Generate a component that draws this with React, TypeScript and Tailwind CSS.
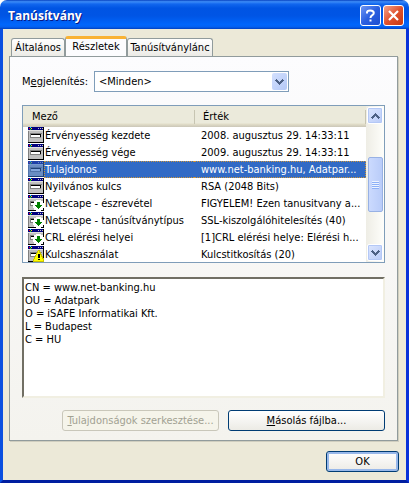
import React, { useState } from 'react';

type FieldKind = 'plain' | 'extension' | 'critical';

interface CertField {
    name: string;
    value: string;
    kind: FieldKind;
}

const FIELDS: CertField[] = [
    { name: 'Érvényesség kezdete', value: '2008. augusztus 29. 14:33:11', kind: 'plain' },
    { name: 'Érvényesség vége', value: '2009. augusztus 29. 14:33:11', kind: 'plain' },
    { name: 'Tulajdonos', value: 'www.net-banking.hu, Adatpar...', kind: 'plain' },
    { name: 'Nyilvános kulcs', value: 'RSA (2048 Bits)', kind: 'plain' },
    { name: 'Netscape - észrevétel', value: 'FIGYELEM! Ezen tanusitvany a...', kind: 'extension' },
    { name: 'Netscape - tanúsítványtípus', value: 'SSL-kiszolgálóhitelesítés (40)', kind: 'extension' },
    { name: 'CRL elérési helyei', value: '[1]CRL elérési helye: Elérési h...', kind: 'extension' },
    { name: 'Kulcshasználat', value: 'Kulcstitkosítás (20)', kind: 'critical' },
];

const SUBJECT = [
    'CN = www.net-banking.hu',
    'OU = Adatpark',
    'O = iSAFE Informatikai Kft.',
    'L = Budapest',
    'C = HU',
].join('\n');

const FieldIcon: React.FC<{ kind: FieldKind; selected: boolean }> = ({ kind, selected }) => (
    <svg width="16" height="16" viewBox="0 0 16 16" shapeRendering="crispEdges" className="block shrink-0" aria-hidden="true">
        <rect width="16" height="16" fill="#000" />
        <rect width="15" height="15" fill="#808080" />
        <rect x="1" y="4" width="14" height="11" fill="#c0c0c0" />
        <rect width="15" height="3" fill="#000080" />
        <path d="M0 3h15v1H0z" fill="#dfdfdf" />
        <path d="M1 1h1v1H1z" fill="#f00" />
        <path d="M2 0h1v1H2z" fill="#0ff" />
        <path d="M3 1h1v1H3z" fill="#ff0" />
        <path d="M2 2h1v1H2z" fill="#0f0" />
        <path d="M10 1h1v1h-1zM12 1h1v1h-1zM14 1h1v1h-1z" fill="#c0c0c0" />
        <path d="M2 6h12v1H3v4H2z" fill="#808080" />
        <path d="M3 7h10v3h-1V8H3z" fill="#000" />
        <path d="M3 8h9v2H3z" fill="#fff" />
        <path d="M3 10h10v1H3z" fill="#808080" />
        {kind === 'extension' && (
            <>
                <path d="M8 5h5v1h2v2h1v5h-1v2h-2v1H8v-1H6v-2H5V8h1V6h2z" fill="#fff" />
                <path d="M9 7h3v3h2v1h-1v1h-1v1h-1v1h-1v-1H9v-1H8v-1H7v-1h2z" fill="#008000" />
            </>
        )}
        {kind === 'critical' && (
            <>
                <path d="M10 4h2v2h1v2h1v2h1v2h1v4H5v-3h1v-2h1V9h1V7h1V5h1z" fill="#c8c000" />
                <path d="M10 5h1v2h1v2h1v2h1v2h1v2H6v-2h1v-2h1V9h1V7h1z" fill="#ff0" />
                <path d="M10 8h2v4h-2zM10 13h2v1h-2z" fill="#000" />
            </>
        )}
        {selected && <rect width="16" height="16" fill="#316ac5" opacity="0.6" />}
    </svg>
);

const Chevron: React.FC<{ up?: boolean }> = ({ up }) => (
    <svg width="9" height="6" viewBox="0 0 9 6" shapeRendering="crispEdges" className={up ? 'rotate-180' : ''} aria-hidden="true">
        <path d="M1 0h1v1h1v1h1v1h1V2h1V1h1V0h1v1h1v1H8v1H7v1H6v1H5v1H4V5H3V4H2V3H1V2H0V1h1z" fill="#4d6185" />
    </svg>
);

const SCROLL_BUTTON = 'flex h-[17px] w-[16px] shrink-0 items-center justify-center rounded-[2px] border border-white bg-linear-to-br from-[#dce6fe] to-[#b9cbf8] shadow-[inset_0_0_0_1px_#b4c8f6]';

const ScrollBar: React.FC = () => (
    <div className="flex w-[18px] shrink-0 flex-col items-center bg-linear-to-r from-[#eeede5] to-[#fefefb] py-px">
        <button type="button" aria-label="Fel" className={SCROLL_BUTTON}>
            <Chevron up />
        </button>
        <div className="flex w-full flex-1 flex-col items-center pt-[33px]">
            <div className="flex h-[55px] w-[15px] flex-col items-center justify-center rounded-[2px] border border-[#98b1e4] bg-linear-to-r from-[#cbdafe] to-[#b9ccf9]">
                {[0, 1, 2, 3].map((line) => (
                    <span key={line} className="h-[2px] w-[7px] border-t border-b border-t-[#eef4fe] border-b-[#8cb0f8]" />
                ))}
            </div>
        </div>
        <button type="button" aria-label="Le" className={SCROLL_BUTTON}>
            <Chevron />
        </button>
    </div>
);

const TitleBar: React.FC = () => (
    <header className="flex h-[29px] shrink-0 items-center gap-[2px] rounded-t-[7px] bg-[linear-gradient(to_bottom,#0842c0_0%,#3c8cf8_6%,#1166ee_14%,#0054e3_28%,#0055e5_55%,#0066fc_85%,#0460f0_93%,#0040c0_100%)] pr-[5px] pl-2 pt-[2px]">
        <h1 className="flex-1 font-['Open_Sans','Noto_Sans',sans-serif] text-[12px] leading-4 font-bold text-white [text-shadow:1px_1px_0_#0a1883]">
            Tanúsítvány
        </h1>
        <button type="button" aria-label="Súgó" className="flex size-[21px] items-center justify-center rounded-[3px] border border-white bg-linear-to-br from-[#6f95f2] via-[#2b5fe0] to-[#1c4ed0]">
            <svg width="11" height="13" viewBox="0 0 11 13" fill="none" stroke="#fff" strokeWidth="2" aria-hidden="true">
                <path d="M2 4.5V3.5Q2 1.5 5.2 1.5Q8.8 1.5 8.8 4Q8.8 5.3 7 6.3Q5.5 7.2 5.5 9" />
                <path d="M5.5 10.5v2" />
            </svg>
        </button>
        <button type="button" aria-label="Bezárás" className="flex size-[21px] items-center justify-center rounded-[3px] border border-white bg-linear-to-br from-[#f0a088] via-[#e0522d] to-[#c8380e]">
            <svg width="11" height="11" viewBox="0 0 11 11" stroke="#fff" strokeWidth="2.2" aria-hidden="true">
                <path d="M1 1l9 9M10 1l-9 9" />
            </svg>
        </button>
    </header>
);

const TAB = 'h-[18px] rounded-t-[3px] border border-b-0 border-[#919b9c] bg-linear-to-b from-white to-[#ecebe6] text-center whitespace-nowrap';

export default function App() {
    const [selected, setSelected] = useState(2);

    return (
        <div className="flex min-h-screen flex-col bg-white font-['DejaVu_Sans_Condensed',Tahoma,'DejaVu_Sans',sans-serif] text-[11px] leading-[13px] text-black">
            <TitleBar />
            <main className="flex flex-1 flex-col border-x-[3px] border-b-[3px] border-[#0a4fe0] border-r-[#0831d9] border-b-[#001ea0] bg-[#ece9d8] pt-[7px] pr-[7px] pl-[6px]">
                <div role="tablist" className="flex items-end pl-[2px]">
                    <button type="button" role="tab" aria-selected="false" className={`${TAB} w-[54px]`}>
                        Általános
                    </button>
                    <button type="button" role="tab" aria-selected="true" className="-mb-px h-[21px] w-[62px] rounded-t-[3px] border-x border-t-[3px] border-x-[#919b9c] border-t-[#f9b233] bg-[#fcfcfe] pb-[3px] text-center">
                        Részletek
                    </button>
                    <button type="button" role="tab" aria-selected="false" className={`${TAB} w-[86px]`}>
                        Tanúsítványlánc
                    </button>
                </div>

                <section role="tabpanel" className="mr-px border border-[#919b9c] bg-linear-to-b from-[#fcfcfe] to-[#f4f3ee] pt-[14px] pr-[12px] pb-[9px] pl-[12px] shadow-[1px_1px_0_#d0cebf]">
                    <div className="flex items-center">
                        <label htmlFor="show" className="w-[72px] shrink-0 whitespace-nowrap">
                            M<u>e</u>gjelenítés:
                        </label>
                        <div className="relative w-[195px]">
                            <select id="show" className="block h-[21px] w-full appearance-none border border-[#7f9db9] bg-white pl-1 text-[11px]">
                                <option>&lt;Minden&gt;</option>
                            </select>
                            <span className="pointer-events-none absolute top-[2px] right-[2px] flex h-[17px] w-[15px] items-center justify-center rounded-[2px] bg-linear-to-br from-[#d3e0fe] to-[#b4c8f6]">
                                <Chevron />
                            </span>
                        </div>
                    </div>

                    <div className="mt-[13px] flex h-[158px] overflow-hidden border border-[#7f9db9] bg-white">
                        <div className="min-w-0 flex-1 overflow-hidden">
                            <table className="w-full table-fixed border-collapse">
                                <colgroup>
                                    <col className="w-[171px]" />
                                    <col />
                                </colgroup>
                                <thead>
                                    <tr className="h-[21px] bg-[linear-gradient(to_bottom,#ebeadb_0,#ebeadb_17px,#e2dec9_18px,#cbc7b8_21px)]">
                                        <th className="p-0 pl-[9px] text-left font-normal">Mező</th>
                                        <th className="p-0 text-left font-normal">
                                            <div className="flex h-[14px] items-center border-x border-l-[#c7c5b2] border-r-[#c7c5b2] pl-2">Érték</div>
                                        </th>
                                    </tr>
                                </thead>
                                <tbody>
                                    {FIELDS.map((field, i) => {
                                        const on = i === selected;
                                        return (
                                            <tr key={field.name} onClick={() => setSelected(i)} className={`h-[17px] whitespace-nowrap ${on ? 'text-white' : ''}`}>
                                                <td className="p-0 pl-[5px]">
                                                    <div className="flex h-[17px]">
                                                        <FieldIcon kind={field.kind} selected={on} />
                                                        <span className={`min-w-0 flex-1 border border-r-0 pt-px ${on ? 'border-dotted border-[#ce953a] bg-[#316ac5]' : 'border-transparent'}`}>
                                                            {field.name}
                                                        </span>
                                                    </div>
                                                </td>
                                                <td className="p-0">
                                                    <div className={`h-[17px] overflow-hidden border border-l-0 pt-px pl-[7px] ${on ? 'border-dotted border-[#ce953a] bg-[#316ac5]' : 'border-transparent'}`}>
                                                        {field.value}
                                                    </div>
                                                </td>
                                            </tr>
                                        );
                                    })}
                                </tbody>
                            </table>
                        </div>
                        <ScrollBar />
                    </div>

                    <textarea
                        readOnly
                        aria-label="Érték"
                        defaultValue={SUBJECT}
                        className="mt-[14px] block h-[121px] w-full resize-none border-2 border-t-[#716f64] border-r-[#f1efe2] border-b-[#f1efe2] border-l-[#716f64] bg-white pt-[2px] pl-px text-[11px] leading-[13px] outline-none"
                    />

                    <div className="mt-3 flex justify-end gap-[9px]">
                        <button type="button" disabled className="h-[21px] w-[157px] rounded-[3px] border border-[#c9c7ba] bg-[#f5f4ea] text-[#a1a192]">
                            <u>T</u>ulajdonságok szerkesztése...
                        </button>
                        <button type="button" className="h-[21px] w-[157px] rounded-[3px] border border-[#003c74] bg-linear-to-b from-white to-[#ecebe5]">
                            <u>M</u>ásolás fájlba...
                        </button>
                    </div>
                </section>

                <div className="mt-[10px] flex justify-end pb-[7px]">
                    <button type="button" className="h-[21px] w-[73px] rounded-[3px] border border-[#003c74] bg-linear-to-b from-white to-[#ecebe5] shadow-[inset_0_0_0_2px_#98b8ea]">
                        OK
                    </button>
                </div>
            </main>
        </div>
    );
}
